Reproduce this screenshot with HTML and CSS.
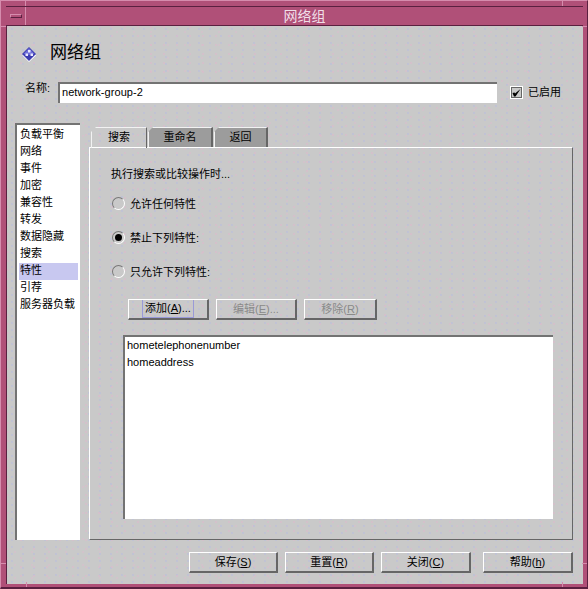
FILE: index.html
```html
<!DOCTYPE html>
<html lang="zh">
<head>
<meta charset="utf-8">
<title>网络组</title>
<link rel="stylesheet" href="styles.css">
</head>
<body>
<div class="window">
  <i class="notch nv ntl"></i><i class="notch nv ntr"></i><i class="notch nv nbl"></i><i class="notch nv nbr"></i>
  <i class="notch nh nlt"></i><i class="notch nh nrt"></i><i class="notch nh nlb"></i><i class="notch nh nrb"></i>
  <header class="titlebar">
    <span class="menu-btn"><span class="menu-dash"></span></span>
    <span class="title-text">网络组</span>
  </header>
  <main class="content">
    <div class="heading">
      <svg class="hicon" width="15" height="15" viewBox="0 0 15 15">
        <path d="M7 1.5 14 8.5 7 15 0.5 8.5Z" fill="#fff"/>
        <path d="M7 0 14 7 7 14 0 7Z" fill="#3c3cb0"/>
        <path d="M7 1 12.5 7 7 8 1.5 7Z" fill="#6c6cd8"/>
        <rect x="6" y="3" width="2.5" height="2.5" fill="#e8e8ff"/>
        <rect x="3.5" y="6.5" width="2.5" height="2.5" fill="#e8e8ff"/>
        <rect x="8.5" y="6.5" width="2.5" height="2.5" fill="#e8e8ff"/>
      </svg>
      <h1 class="htext">网络组</h1>
    </div>
    <div class="name-row">
      <label class="name-label">名称:</label>
      <div class="name-input">network-group-2</div>
      <span class="check">
        <svg width="9" height="9" viewBox="0 0 9 9"><path d="M0.5 5 2 8.5 3.5 8.5 8.5 1 3 5.5 2.5 4.5Z" fill="#000"/></svg>
      </span>
      <span class="check-label">已启用</span>
    </div>
    <div class="main-row">
      <ul class="nav">
        <li>负载平衡</li><li>网络</li><li>事件</li><li>加密</li><li>兼容性</li><li>转发</li><li>数据隐藏</li><li>搜索</li><li class="selected">特性</li><li>引荐</li><li>服务器负载</li>
      </ul>
      <div class="tabs-area">
        <div class="tabs">
          <div class="tab tab-on tab1">搜索</div>
          <div class="tab tab2">重命名</div>
          <div class="tab tab3">返回</div>
        </div>
        <section class="panel">
          <p class="desc">执行搜索或比较操作时...</p>
          <div class="radio-row"><span class="radio"></span><span>允许任何特性</span></div>
          <div class="radio-row"><span class="radio on"></span><span>禁止下列特性:</span></div>
          <div class="radio-row"><span class="radio"></span><span>只允许下列特性:</span></div>
          <div class="actions">
            <button class="btn add"><span class="focus">添加(<u>A</u>)...</span></button>
            <button class="btn add off">编辑(<u>E</u>)...</button>
            <button class="btn rem off">移除(<u>R</u>)</button>
          </div>
          <div class="listbox">
            <div>hometelephonenumber</div>
            <div>homeaddress</div>
          </div>
        </section>
      </div>
    </div>
    <footer class="footer">
      <button class="btn fbtn">保存(<u>S</u>)</button>
      <button class="btn fbtn">重置(<u>R</u>)</button>
      <button class="btn fbtn close">关闭(<u>C</u>)</button>
      <button class="btn fbtn help">帮助(<u>h</u>)</button>
    </footer>
  </main>
</div>
</body>
</html>
```
FILE: styles.css
```css
* { box-sizing: border-box; }
html, body { margin: 0; padding: 0; }
body {
  width: 588px; height: 589px; overflow: hidden;
  font-family: "Liberation Sans", "Noto Sans CJK SC", sans-serif;
  font-size: 11px; color: #000;
}
.window {
  position: relative;
  width: 588px; height: 589px;
  background: #b05078;
  padding: 5px 4px 3px 5px;
  border-top: 1px solid #d58cad;
  border-left: 1px solid #d58cad;
  border-right: 1px solid #5a2040;
  border-bottom: 2px solid #5a2040;
  display: flex; flex-direction: column;
}
.notch { position: absolute; background: #d58cad; }
.nv { width: 1px; height: 5px; }
.nh { width: 5px; height: 1px; }
.ntl { left: 24px; top: 0; } .ntr { left: 561px; top: 0; }
.nbl { left: 25px; bottom: 0; } .nbr { left: 561px; bottom: 0; }
.nlt { left: 0; top: 25px; } .nrt { right: 0; top: 25px; }
.nlb { left: 0; top: 562px; } .nrb { right: 0; top: 562px; }
.titlebar {
  height: 20px; flex: none; position: relative;
  background: #b05078;
  border-top: 1px solid #5a2040;
  border-bottom: 1px solid #5a2040;
  display: flex; align-items: center; justify-content: center;
}
.menu-btn {
  position: absolute; left: 0; top: 0; width: 20px; height: 18px;
  border-right: 1px solid #d58cad;
  display: flex; align-items: center; justify-content: center;
}
.menu-dash { width: 12px; height: 4px; background: #b05078; border: 1px solid #5a2040; border-top-color: #d58cad; border-left-color: #d58cad; }
.title-text { color: #f0dfe8; font-size: 14px; line-height: 18px; margin-left: 20px; }
.content {
  flex: 1; display: flex; flex-direction: column;
  border-left: 1px solid #5a2040;
  padding: 19px 9px 0 8px;
  width: 577px;
  background-color: #c9c9c9;
  background-image:
    radial-gradient(circle at 1px 1px, #d9bccb 0.6px, transparent 0.9px),
    radial-gradient(circle at 1px 1px, #bcbfda 0.6px, transparent 0.9px),
    radial-gradient(circle at 1px 1px, #d6c0cc 0.6px, transparent 0.9px);
  background-size: 13px 9px, 11px 7px, 17px 13px;
  background-position: 0 0, 4px 2px, 7px 5px;
}
.heading { display: flex; align-items: center; height: 18px; margin-left: 7px; }
.hicon { flex: none; }
.htext { margin: -2px 0 0 13px; font-size: 17px; font-weight: 400; line-height: 18px; }
.name-row { display: flex; align-items: flex-start; margin-top: 19px; height: 21px; }
.name-label { width: 33px; margin-left: 10px; line-height: 12px; flex: none; }
.name-input {
  width: 439px; height: 21px; flex: none;
  background: #fff;
  border-top: 2px solid #737373;
  border-left: 2px solid #737373;
  padding-left: 2px;
  font-size: 11px; line-height: 16px;
  letter-spacing: 0.05px;
}
.check {
  width: 13px; height: 13px; margin: 4px 0 0 13px; flex: none;
  background: #c9c9c9;
  border: 2px solid #666;
  outline: 1px solid #fff;
  outline-offset: -1px;
  display: flex; align-items: center; justify-content: center;
}
.check-label { margin: 4px 0 0 5px; line-height: 13px; }
.main-row { display: flex; margin-top: 20px; height: 417px; }
.nav {
  list-style: none; margin: 0; padding: 2px 0 0 2px;
  width: 65px; height: 417px; flex: none;
  background: #fff;
  border-top: 2px solid #737373;
  border-left: 2px solid #737373;
}
.nav li { height: 17px; line-height: 15px; padding-left: 1px; margin-right: 2px; white-space: nowrap; }
.nav .selected { background: #c8c8f0; }
.tabs-area { margin-left: 9px; width: 484px; height: 417px; display: flex; flex-direction: column; }
.tabs { display: flex; height: 24px; margin-left: 2px; flex: none; align-items: flex-end; }
.tab {
  height: 20px; text-align: center; line-height: 19px;
  background: #9c9c9c;
  border-top: 1px solid #f2f2f2;
  border-left: 1px solid #f2f2f2;
  border-right: 2px solid #666;
  clip-path: polygon(5px 0, 100% 0, 100% 100%, 0 100%, 0 5px);
}
.tab-on { background: transparent; height: 21px; border-right: 1px solid #666; margin-bottom: -1px; position: relative; z-index: 1; }
.tab1 { width: 56px; }
.tab2 { width: 65px; margin-left: 1px; }
.tab3 { width: 54px; margin-left: 1px; }
.panel {
  flex: 1; min-height: 0;
  border-top: 1px solid #fff;
  border-left: 1px solid #fff;
  border-right: 1px solid #666;
  border-bottom: 1px solid #666;
  padding: 19px 19px 0 21px;
}
.desc { margin: 0 0 15px; line-height: 14px; }
.radio-row { display: flex; align-items: center; gap: 5px; height: 14px; margin: 0 0 20px 1px; }
.radio {
  width: 13px; height: 13px; border-radius: 50%; flex: none;
  border: 1px solid #777;
  border-right-color: #fff; border-bottom-color: #fff;
  background: #c9c9c9;
  display: flex; align-items: center; justify-content: center;
}
.radio.on::after { content: ""; width: 7px; height: 7px; border-radius: 50%; background: #000; }
.actions { display: flex; gap: 7px; margin: 21px 0 0 17px; height: 21px; }
.btn {
  font: inherit; color: #000; padding: 0; margin: 0;
  height: 21px;
  background: transparent;
  border: 1px solid #fff;
  border-right: 2px solid #666;
  border-bottom: 2px solid #666;
  display: flex; align-items: center; justify-content: center;
  line-height: 16px;
}
.add { width: 81px; }
.rem { width: 73px; }
.focus { display: block; align-self: flex-end; padding: 0 2px; height: 18px; line-height: 16px; border-left: 1px solid #9a9ad8; border-right: 1px solid #9a9ad8; border-bottom: 1px solid #9a9ad8; }
.off { color: #8a8a8a; }
.listbox {
  margin: 15px 0 0 12px; width: 430px; height: 184px;
  background: #fff;
  border-top: 2px solid #737373;
  border-left: 2px solid #737373;
  padding: 1px 2px;
}
.listbox div { height: 17px; line-height: 15px; }
.footer { display: flex; margin: 12px 0 0 174px; gap: 7px; }
.fbtn { width: 89px; }
.close { width: 90px; }
.help { width: 90px; margin-left: 5px; }
```
